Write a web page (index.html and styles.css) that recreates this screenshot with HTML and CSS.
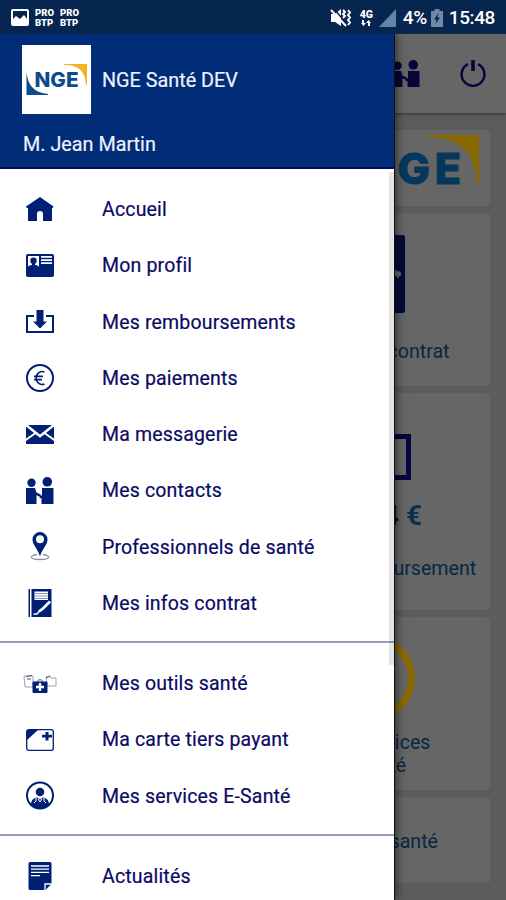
FILE: index.html
```html
<!DOCTYPE html>
<html lang="fr">
<head>
  <meta charset="UTF-8">
  <meta name="viewport" content="width=device-width, initial-scale=1.0">
  <title>NGE Santé</title>
  <link rel="stylesheet" href="styles.css">
</head>
<body>
  <!-- Shared icons -->
  <svg class="sprite" width="0" height="0">
    <symbol id="contacts" viewBox="0 0 28 28">
      <circle cx="5.5" cy="5.8" r="4.2"/>
      <circle cx="21.3" cy="4.8" r="4.8"/>
      <path d="M0 11h9l1.500 4.500 4.500 2.200-.8 2.200-3.700-1.600V27H0zM16 11h11.500v16H15.500v-6l-1.800.6v-1.800l2.300-1.800z"/>
    </symbol>
  </svg>

  <div class="screen">
    <!-- Status bar -->
    <header class="status">
      <svg class="status-picture" width="18" height="17" viewBox="0 0 18 17">
        <path fill="#fff" fill-rule="evenodd" d="M2 0h14a2 2 0 0 1 2 2v13a2 2 0 0 1-2 2H2a2 2 0 0 1-2-2V2a2 2 0 0 1 2-2zm0 2v8l3-3 4 3 4-4 3 4V2z"/>
      </svg>
      <span class="status-app">PRO<br>BTP</span>
      <span class="status-app">PRO<br>BTP</span>
      <div class="status-right">
        <svg width="21" height="20" viewBox="0 0 21 20">
          <path fill="#fff" d="M1 6h4l6-5v17l-6-4H1z"/>
          <path stroke="#07264f" stroke-width="1.500" d="M4 1l14 16"/>
          <path stroke="#fff" stroke-width="2" d="M1 2l15 16"/>
          <path fill="none" stroke="#fff" stroke-width="2" d="M13 2l2 2-2 2 2 2-2 2M18 2l2 2.500-2 2.500 2 2.500-2 2.500 2 2.500-2 2.500"/>
        </svg>
        <span class="status-net">4G<svg width="10" height="6" viewBox="0 0 10 6"><path fill="#fff" d="M1 0h2v3h2L2.500 6 0 3h1zM7 6h2V3h1L7.500 0 5 3h2z"/></svg></span>
        <svg class="status-signal" width="17" height="18" viewBox="0 0 17 18"><path fill="#6283ac" d="M17 0v18H0z"/></svg>
        <span class="status-text">4%</span>
        <svg class="status-battery" width="12" height="18" viewBox="0 0 12 18">
          <path fill="#7189a6" d="M3.500 0h5v2H12v16H0V2h3.500z"/>
          <path fill="#07264f" d="M7.500 4L3 10.500h2.500L4.500 15 9 8.500H6.500z"/>
        </svg>
        <span class="status-text">15:48</span>
      </div>
    </header>

    <!-- Home page behind the menu -->
    <main class="home">
      <div class="topbar">
        <svg class="topbar-contacts" width="28" height="28"><use href="#contacts"/></svg>
        <svg width="28" height="28" viewBox="0 0 28 28">
          <path fill="none" stroke="#05053a" stroke-width="2.400" d="M9 4.200a11.400 11.400 0 1 0 10 0"/>
          <path stroke="#05053a" stroke-width="3.600" d="M14 0v11"/>
        </svg>
      </div>
      <div class="cards">
        <section class="card card-logo">
          <svg width="140" height="66" viewBox="0 0 140 66">
            <text class="logo-text" x="20" y="49" textLength="102" lengthAdjust="spacing" fill="#06375c" stroke="#06375c" font-size="44"><tspan>N</tspan><tspan font-size="43">GE</tspan></text>
            <path fill="#8a6a00" d="M90 0h50v50h-2C137 20 125 4 90 2z"/>
          </svg>
        </section>
        <section class="card card-contract">
          <svg width="64" height="78" viewBox="0 0 64 78">
            <rect width="64" height="78" rx="2" fill="#000b38"/>
            <path fill="#5c6a74" d="M50 35q4-2 6 1 5 0 4 4l-4 4v-3h-2q0 5-4 4z"/>
          </svg>
          <p>Mes infos contrat</p>
        </section>
        <section class="card card-refund">
          <svg width="76" height="46" viewBox="0 0 76 46">
            <path fill="none" stroke="#05053f" stroke-width="5" d="M22 2.500H2.500v41h71v-41H54"/>
          </svg>
          <strong>24,04 <span>€</span></strong>
          <p>Dernier remboursement</p>
        </section>
        <section class="card card-services">
          <svg width="84" height="84" viewBox="0 0 84 84">
            <circle cx="42" cy="42" r="38.500" fill="none" stroke="#8a6a00" stroke-width="7"/>
          </svg>
          <p>Mes services<br>E-Santé</p>
        </section>
        <section class="card card-tools">
          <p>Outils de santé</p>
        </section>
      </div>
    </main>

    <!-- Side menu -->
    <aside class="drawer">
      <div class="drawer-header">
        <div class="brand">
          <svg class="brand-logo" width="69" height="69" viewBox="0 0 69 69">
            <rect width="69" height="69" fill="#fff"/>
            <text class="logo-text" x="12.500" y="42" textLength="44" lengthAdjust="spacingAndGlyphs" fill="#0c4c8c" font-size="20.500">NGE</text>
            <path fill="#f0b323" d="M42 19h23v21h-1C63 28 59 20 42 20z"/>
            <path fill="#0c4c8c" d="M4.500 27C6 39 10 47 26 49v1H4.500z"/>
          </svg>
          <span>NGE Santé DEV</span>
        </div>
        <div class="user">M. Jean Martin</div>
      </div>

      <nav class="menu">
        <ul class="menu-group">
          <li>
            <svg viewBox="0 0 28 28"><path d="M14 1l13.500 9.500-.8 1.500H26v13h-9v-7a3 3 0 0 0-6 0v7H2V12H.8L0 10.500z"/></svg>
            Accueil
          </li>
          <li>
            <svg viewBox="0 0 28 28">
              <path d="M2 2h24a2 2 0 0 1 2 2v19a2 2 0 0 1-2 2H2a2 2 0 0 1-2-2V4a2 2 0 0 1 2-2z"/>
              <path fill="#fff" d="M2 4h11v12H2zM15 4h11v1.800H15zM15 7.200h11v1.800H15zM15 10.300h11v1.800H15z"/>
              <circle cx="7.500" cy="8.800" r="3.200"/>
              <path d="M1 17q1-4 5-4V11h3v2q4 0 5 4z"/>
            </svg>
            Mon profil
          </li>
          <li>
            <svg viewBox="0 0 28 28">
              <path class="line" d="M8 8H1v16h26V8h-7"/>
              <path d="M10.500 2h7v11.500h3.500l-7 7-7-7h3.500z"/>
            </svg>
            Mes remboursements
          </li>
          <li>
            <svg viewBox="0 0 28 28">
              <circle class="line" cx="14" cy="14" r="13"/>
              <path class="line euro" d="M18.500 8a6 6.500 0 1 0 0 12M8 12.400H17M8 15.600H16"/>
            </svg>
            Mes paiements
          </li>
          <li>
            <svg viewBox="0 0 28 28">
              <path d="M2 4h24L14 13.500zM0 5.500l8 6.500-8 5.500zM28 5.500l-8 6.500 8 5.500zM0 20l9.500-6.800 4.500 3.500 4.500-3.500L28 20v3H0z"/>
            </svg>
            Ma messagerie
          </li>
          <li>
            <svg viewBox="0 0 28 28"><use href="#contacts"/></svg>
            Mes contacts
          </li>
          <li>
            <svg viewBox="0 0 28 28">
              <path fill="none" stroke="#8c8ca8" stroke-width="1.300" d="M11 21.500c-8 1-8 5 3 5s11-4 3-5"/>
              <path fill-rule="evenodd" d="M14-1a7.500 7.500 0 0 1 7.500 7.500C21.500 12 16 16 14 23.500 12 16 6.500 12 6.500 6.500A7.500 7.500 0 0 1 14-1zm0 3.200a4 4 0 1 0 0 8 4 4 0 0 0 0-8z"/>
            </svg>
            Professionnels de santé
          </li>
          <li>
            <svg viewBox="0 0 28 28">
              <path d="M2.500 0h1.500v28H2.500zM5.500 0h20v28h-20z"/>
              <path fill="#fff" d="M8.500 2.500H22v8.500H8.500z"/>
              <path stroke="#8d96bc" d="M8.500 4.500H22M8.500 7H22M8.500 9.500H22"/>
              <path fill="none" stroke="#fff" stroke-width="2.800" d="M24 12.500l-7 7-4 3"/>
              <path fill="none" stroke="#fff" stroke-width="1.500" d="M14 21.500l-3 3.500H7.500"/>
            </svg>
            Mes infos contrat
          </li>
        </ul>

        <ul class="menu-group">
          <li>
            <svg class="wide" viewBox="0 0 34 28">
              <path fill="none" stroke="#a0a3ad" d="M1 6h9v11H2zM23 7l4-1 1 2h5v8h-9z"/>
              <path stroke="#4b5378" d="M3 6.500l6-1M4 9h4M23 8l4-2"/>
              <path fill="none" stroke="#8c96a8" stroke-width="1.500" d="M14 12q3-5 6 0"/>
              <rect x="9.500" y="11.500" width="15" height="11.500" rx="1"/>
              <path fill="#fff" d="M15.800 13h2.400v2.800H21v2.400h-2.800V21h-2.400v-2.800H13v-2.400h2.800z"/>
            </svg>
            Mes outils santé
          </li>
          <li>
            <svg viewBox="0 0 28 28">
              <rect class="line thin" x=".7" y="3.700" width="26.600" height="20.600" rx="2"/>
              <path d="M1 4h11L1 14zM19.500 6h3v2.800H26v2.700h-3.500v3h-3v-3H16V8.800h3.500z"/>
            </svg>
            Ma carte tiers payant
          </li>
          <li>
            <svg viewBox="0 0 28 28">
              <circle class="line" cx="14" cy="13.500" r="13"/>
              <circle cx="14" cy="10" r="4.300"/>
              <path d="M5 22.500q0-6 6-7l3 2 3-2q6 1 6 7-4 4-9 4t-9-4z"/>
              <path fill="none" stroke="#fff" d="M10 16v3l-2 2M18 16v3l2 2M12 17l2 3 2-3"/>
            </svg>
            Mes services E-Santé
          </li>
        </ul>

        <ul class="menu-group">
          <li>
            <svg viewBox="0 0 28 28">
              <path d="M4 0h20a1.500 1.500 0 0 1 1.500 1.500V22l-6 6H4a1.500 1.500 0 0 1-1.500-1.500v-25A1.500 1.500 0 0 1 4 0z"/>
              <path fill="none" stroke="#fff" stroke-width="1.300" d="M5 4h18M5 7.200h18M5 10.400h18M5 13.600h9M19 28v-6h7"/>
            </svg>
            Actualités
          </li>
        </ul>
      </nav>
      <div class="scrollbar"></div>
    </aside>
  </div>
</body>
</html>
```

FILE: styles.css
```css
body {
  margin: 0;
  font-family: Roboto, sans-serif;
}

p, ul {
  margin: 0;
  padding: 0;
}

svg {
  display: block;
  flex: none;
  overflow: visible;
}

.sprite {
  position: absolute;
}

.screen {
  position: relative;
  width: 506px;
  height: 900px;
  overflow: hidden;
  background: #5c5c5c;
}

/* Status bar */
.status {
  display: flex;
  align-items: center;
  height: 34px;
  box-sizing: border-box;
  padding: 1px 11px 0;
  background: #07264f;
  color: #fff;
}

.status-picture {
  margin-right: 6px;
}

.status-app {
  width: 19px;
  margin-right: 6px;
  font-size: 9.5px;
  font-weight: 900;
  line-height: 10px;
}

.status-right {
  display: flex;
  align-items: center;
  margin-left: auto;
}

.status-net {
  display: flex;
  flex-direction: column;
  align-items: center;
  width: 15px;
  margin: 0 5px 0 8px;
  font-size: 10.5px;
  font-weight: 900;
  line-height: 11px;
}

.status-text {
  font-size: 19px;
  font-weight: 500;
  letter-spacing: -0.4px;
}

.status-signal {
  margin-right: 7px;
}

.status-battery {
  margin: 0 6px 0 4px;
}

/* Home page */
.topbar {
  display: flex;
  align-items: center;
  justify-content: flex-end;
  gap: 39px;
  height: 79px;
  padding-right: 19px;
  background: #666;
  box-shadow: 0 1px 3px #333;
}

.topbar-contacts {
  fill: #05053a;
}

.cards {
  display: flex;
  flex-direction: column;
  align-items: flex-end;
  gap: 7px;
  padding: 17px 16px 0 0;
  font-size: 19.6px;
  line-height: 23px;
  color: #082646;
}

.card {
  display: flex;
  flex-direction: column;
  align-items: center;
  box-sizing: border-box;
  width: 234px;
  border-radius: 3px;
  background: #666;
}

.card-logo {
  height: 76px;
  align-items: flex-end;
  padding: 5px 11px 0 0;
}

.card-contract {
  height: 173px;
  padding-top: 22px;
}

.card-contract p {
  margin-top: 27px;
}

.card-refund {
  height: 217px;
  padding-top: 41px;
}

.card-refund strong {
  margin: 21px -4px 26px 0;
  font-size: 28px;
  line-height: 30px;
  color: #111;
}

.card-refund span {
  color: #08304f;
}

.card-services {
  height: 173px;
  padding-top: 19px;
}

.card-services p {
  margin-top: 11px;
  text-align: center;
}

.card-tools {
  height: 86px;
  padding-top: 2px;
  justify-content: center;
}

.logo-text {
  font-family: Inter, sans-serif;
  font-weight: 800;
}

/* Side menu */
.drawer {
  position: absolute;
  top: 34px;
  left: 0;
  width: 394px;
  height: 866px;
  background: #fff;
  border-right: 1px solid #111;
  box-shadow: 0 0 10px rgba(0, 0, 0, 0.7);
  clip-path: inset(0 -20px 0 0);
}

.drawer-header {
  height: 135px;
  box-sizing: border-box;
  padding: 11px 22px 0;
  border-bottom: 2px solid #00085c;
  background: #002c78;
  font-size: 19.8px;
  color: #eef1fa;
  -webkit-text-stroke: 0.2px;
}

.brand {
  display: flex;
  align-items: center;
  gap: 11px;
}

.brand span {
  padding-top: 2px;
}

.user {
  margin-top: 19px;
  padding-left: 1px;
}

.menu-group {
  padding: 12px 0 10px;
  list-style: none;
  border-bottom: 2px solid #9b9bb3;
}

.menu-group li {
  display: flex;
  align-items: center;
  height: 56.25px;
  box-sizing: border-box;
  padding: 1px 0 0 26px;
  font-size: 19.5px;
  letter-spacing: 0.17px;
  color: #0a0a64;
  -webkit-text-stroke: 0.2px;
}

.menu-group svg {
  width: 28px;
  height: 28px;
  margin-right: 48px;
  fill: #002074;
}

.menu-group .wide {
  width: 34px;
  margin: 0 45px 0 -3px;
}

.menu-group .line {
  fill: none;
  stroke: #002074;
  stroke-width: 2;
}

.menu-group .thin {
  stroke-width: 1.3;
}

.menu-group .euro {
  stroke-width: 1.6;
}

.scrollbar {
  position: absolute;
  top: 138px;
  right: 0;
  width: 5px;
  height: 493px;
  background: rgba(0, 0, 0, 0.1);
}
```
